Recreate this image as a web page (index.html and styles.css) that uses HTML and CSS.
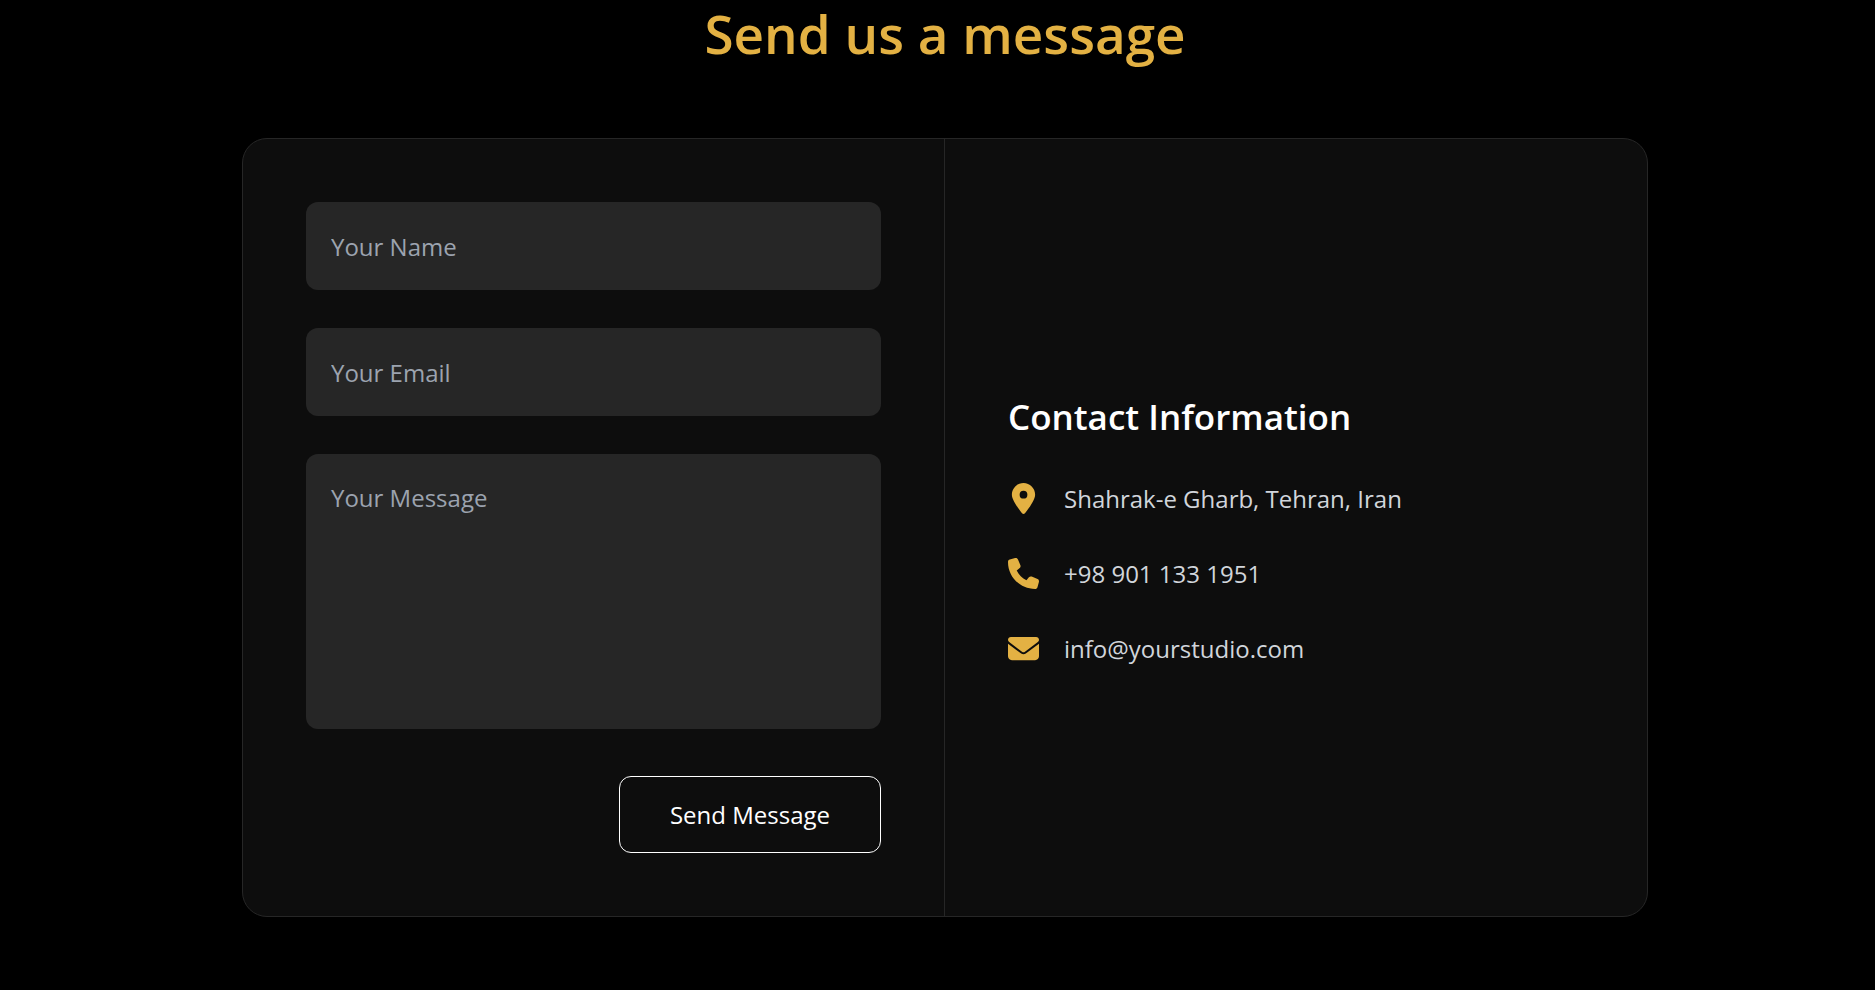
FILE: index.html
```html
<!DOCTYPE html>
<html lang="en">
<head>
<meta charset="utf-8">
<meta name="viewport" content="width=device-width, initial-scale=1">
<title>Send us a message</title>
<link rel="stylesheet" href="styles.css">
</head>
<body>
<main class="contact">
  <h1 class="contact-title">Send us a message</h1>
  <div class="card">
    <form class="form">
      <input class="field" type="text" name="name" placeholder="Your Name" aria-label="Your Name">
      <input class="field" type="email" name="email" placeholder="Your Email" aria-label="Your Email">
      <textarea class="field field-message" name="message" placeholder="Your Message" aria-label="Your Message"></textarea>
      <button class="submit" type="submit">Send Message</button>
    </form>
    <section class="info">
      <h2 class="info-title">Contact Information</h2>
      <ul class="info-list">
        <li class="info-item">
          <svg class="icon" viewBox="0 0 384 512" aria-hidden="true"><path d="M215.7 499.2C267 435 384 279.4 384 192C384 86 298 0 192 0S0 86 0 192c0 87.400 117 243 168.300 307.200c12.300 15.300 35.100 15.300 47.400 0zM192 128a64 64 0 1 1 0 128 64 64 0 1 1 0-128z"/></svg>
          <span>Shahrak-e Gharb, Tehran, Iran</span>
        </li>
        <li class="info-item">
          <svg class="icon" viewBox="0 0 512 512" aria-hidden="true"><path d="M164.900 24.600c-7.700-18.600-28-28.500-47.400-23.200l-88 24C12.100 30.200 0 46 0 64C0 311.400 200.600 512 448 512c18 0 33.800-12.100 38.600-29.500l24-88c5.300-19.400-4.600-39.700-23.200-47.400l-96-40c-16.300-6.800-35.200-2.100-46.300 11.600L304.700 368C234.300 334.700 177.300 277.700 144 207.300L193.300 167c13.700-11.200 18.400-30 11.600-46.300l-40-96z"/></svg>
          <span>+98 901 133 1951</span>
        </li>
        <li class="info-item">
          <svg class="icon" viewBox="0 0 512 512" aria-hidden="true"><path d="M48 64C21.500 64 0 85.500 0 112c0 15.100 7.100 29.300 19.200 38.400L236.800 313.600c11.400 8.500 27 8.500 38.400 0L492.800 150.400c12.100-9.100 19.200-23.300 19.200-38.400c0-26.500-21.500-48-48-48H48zM0 176V384c0 35.300 28.700 64 64 64H448c35.300 0 64-28.700 64-64V176L294.400 339.200c-22.800 17.100-54 17.100-76.800 0L0 176z"/></svg>
          <span>info@yourstudio.com</span>
        </li>
      </ul>
    </section>
  </div>
</main>
</body>
</html>
```
FILE: styles.css
```css
* {
  box-sizing: border-box;
}

body {
  margin: 0;
  background: #000;
  color: #fff;
  font-family: "Open Sans", "Noto Sans", sans-serif;
  font-size: 24px;
}

.contact {
  display: flex;
  flex-direction: column;
  align-items: center;
  gap: 70px;
  padding: 0 0 72px 15px;
}

.contact-title {
  margin: 0;
  color: #e3b143;
  font-size: 53px;
  font-weight: 600;
  line-height: 68px;
}

.card {
  display: grid;
  grid-template-columns: 1fr 1fr;
  width: 100%;
  max-width: 1406px;
  overflow: hidden;
  border: 1px solid #262626;
  border-radius: 25px;
  background: #0d0d0d;
}

.form {
  display: flex;
  flex-direction: column;
  gap: 38px;
  padding: 63px;
  border-right: 1px solid #262626;
}

.field {
  display: block;
  width: 100%;
  height: 88px;
  padding: 25px;
  border: 0;
  border-radius: 12px;
  background: #262626;
  color: #fff;
  font: inherit;
  line-height: 38px;
}

.field::placeholder {
  color: #9ca3af;
  opacity: 1;
}

.field-message {
  height: 275px;
  resize: none;
}

.submit {
  align-self: flex-end;
  margin-top: 9px;
  padding: 18px 50px;
  border: 1px solid #fff;
  border-radius: 12px;
  background: transparent;
  color: #fff;
  font: inherit;
  line-height: 39px;
}

.info {
  display: flex;
  flex-direction: column;
  justify-content: center;
  gap: 34px;
  padding: 63px;
}

.info-title {
  margin: 0;
  font-size: 35px;
  font-weight: 600;
  line-height: 58px;
}

.info-list {
  display: flex;
  flex-direction: column;
  gap: 37px;
  margin: 0;
  padding: 0;
  list-style: none;
}

.info-item {
  display: flex;
  align-items: center;
  gap: 25px;
  color: #d1d5db;
  line-height: 38px;
}

.icon {
  flex: none;
  width: 31px;
  height: 31px;
  fill: #e3b143;
}
```
